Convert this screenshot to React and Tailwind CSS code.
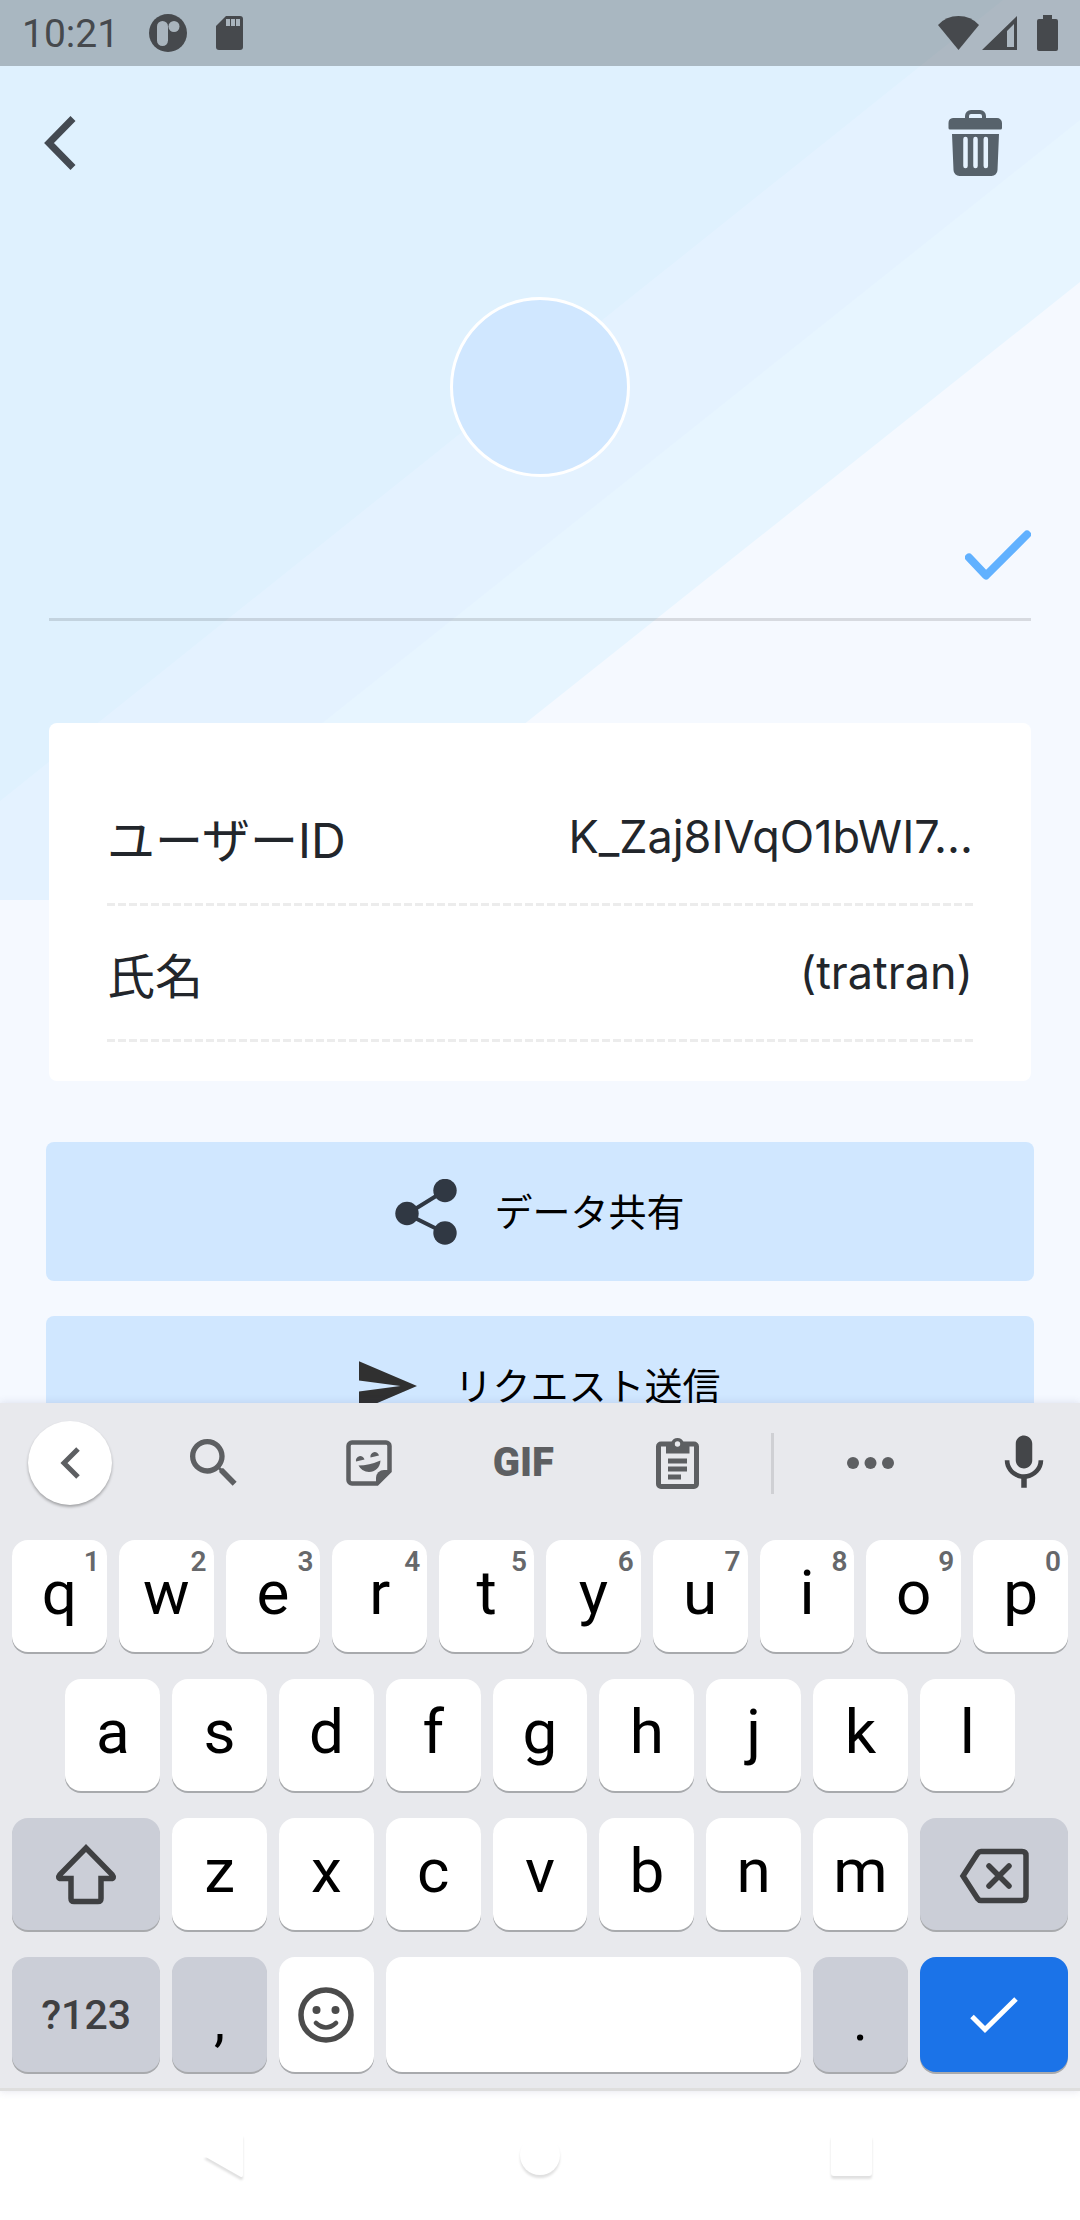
import React from "react";

const profileRows = [
  { label: "ユーザーID", value: "K_Zaj8IVqO1bWI7..." },
  { label: "氏名", value: "(tratran)" },
];

const topRow = ["q", "w", "e", "r", "t", "y", "u", "i", "o", "p"];
const homeRow = ["a", "s", "d", "f", "g", "h", "j", "k", "l"];
const bottomRow = ["z", "x", "c", "v", "b", "n", "m"];

function Backdrop() {
  return (
    <svg
      className="absolute inset-x-0 top-0 h-[900px] w-full"
      viewBox="0 0 1080 900"
      preserveAspectRatio="none"
      aria-hidden="true"
    >
      <path d="M0 0H1080V282L303 900H0Z" fill="#e7f5ff" />
      <path d="M0 0H1080V120L100 900H0Z" fill="#e4f2ff" />
      <path d="M0 0H1003L0 801Z" fill="#dff1fe" />
    </svg>
  );
}

function StatusBar() {
  return (
    <div className="flex h-[66px] shrink-0 items-center bg-black/24 pr-[22px] pl-[22px] text-[#46494d]">
      <span className="pt-[2px] text-[39px] leading-none">10:21</span>
      <svg className="ml-[30px] h-[38px] w-[38px]" viewBox="0 0 38 38" aria-hidden="true">
        <circle cx="19" cy="19" r="19" fill="currentColor" />
        <rect x="8" y="7" width="11" height="25" rx="5.5" fill="#a9b4bd" />
        <circle cx="25" cy="12.500" r="5.500" fill="#a9b4bd" />
      </svg>
      <svg className="ml-[28px] h-[36px] w-[28px]" viewBox="0 0 28 36" aria-hidden="true">
        <path d="M11 1H25a3 3 0 0 1 3 3V32a3 3 0 0 1-3 3H4a3 3 0 0 1-3-3V11Z" fill="currentColor" />
        <path d="M11 4h4v7h-4zM16 4h4v7h-4zM21 4h4v7h-4z" fill="#a9b4bd" />
      </svg>
      <span className="flex-1" />
      <svg className="h-[36px] w-[41px]" viewBox="0 0 41 36" aria-hidden="true">
        <path d="M0 10Q8 1 20.500 1T41 10L20.500 35Z" fill="currentColor" />
      </svg>
      <svg className="ml-[3px] h-[36px] w-[35px]" viewBox="0 0 35 36" aria-hidden="true">
        <path d="M35 1V35H0ZM32 9L25 16V32H32Z" fill="currentColor" fillRule="evenodd" />
      </svg>
      <svg className="ml-[20px] h-[36px] w-[21px]" viewBox="0 0 21 36" aria-hidden="true">
        <path d="M6 0h9v4h4a2 2 0 0 1 2 2V34a2 2 0 0 1-2 2H2a2 2 0 0 1-2-2V6a2 2 0 0 1 2-2h4z" fill="currentColor" />
      </svg>
    </div>
  );
}

function Header() {
  return (
    <header className="flex h-[154px] items-center justify-between pr-[77px] pl-[44px]">
      <button type="button" aria-label="戻る" className="text-[#444a52]">
        <svg className="h-[54px] w-[32px]" viewBox="0 0 32 54">
          <path d="M29 2.500L5 27L29 51.500" fill="none" stroke="currentColor" strokeWidth="7" />
        </svg>
      </button>
      <button type="button" aria-label="削除" className="text-[#57626b]">
        <svg className="h-[66px] w-[55px]" viewBox="0 0 55 66">
          <path d="M19 10V6a4 4 0 0 1 4-4H32a4 4 0 0 1 4 4V10" fill="none" stroke="currentColor" strokeWidth="4" />
          <path d="M5 8H49a5 5 0 0 1 5 5V18a1.500 1.500 0 0 1-1.500 1.500H2A1.500 1.500 0 0 1 .500 18V13A5 5 0 0 1 5 8Z" fill="currentColor" />
          <path d="M4 24H51L49.500 60a6 6 0 0 1-6 6H11.500a6 6 0 0 1-6-6Z" fill="currentColor" />
          <path d="M17.500 29V56M27.500 29V56M37.800 29V56" stroke="#e6f3ff" strokeWidth="4.500" strokeLinecap="round" />
        </svg>
      </button>
    </header>
  );
}

function ActionButton({ icon, children }) {
  return (
    <button
      type="button"
      className="flex h-[139px] w-full items-center justify-center gap-[37px] rounded-lg bg-[#d0e7ff] text-[38px] text-black"
    >
      {icon}
      <span className="pt-1">{children}</span>
    </button>
  );
}

const ShareIcon = (
  <svg className="h-[66px] w-[62px] text-[#303843]" viewBox="0 0 62 66" aria-hidden="true">
    <path d="M50 11.500L12 35L50 54" fill="none" stroke="currentColor" strokeWidth="4" />
    <circle cx="50" cy="11.500" r="11.700" fill="currentColor" />
    <circle cx="12" cy="34.500" r="11.700" fill="currentColor" />
    <circle cx="50" cy="54" r="11.700" fill="currentColor" />
  </svg>
);

const SendIcon = (
  <svg className="h-[50px] w-[58px] text-[#303030]" viewBox="2 3 21 18" aria-hidden="true">
    <path d="M2 3v7l15 2-15 2v7l21-9z" fill="currentColor" />
  </svg>
);

function Key({ wide, tone = "light", label, className = "", children }) {
  const tones = {
    light: "bg-white",
    dark: "bg-[#cbced7]",
    blue: "bg-[#1b73e8]",
  };
  return (
    <button
      type="button"
      aria-label={label}
      className={`relative flex items-center justify-center rounded-2xl shadow-[0_2px_0_#a8aaad] ${tones[tone]} ${wide || "col-span-2"} ${className}`}
    >
      {children}
    </button>
  );
}

function LetterKey({ letter, hint, className = "" }) {
  return (
    <Key className={`pb-[6px] text-[62px] leading-none text-black ${className}`}>
      {letter}
      {hint && (
        <span className="absolute top-2 right-[7px] text-[28px] leading-none font-semibold text-[#66686b]">
          {hint}
        </span>
      )}
    </Key>
  );
}

function Toolbar() {
  const cell = "flex flex-1 items-center justify-center";
  return (
    <div className="flex h-[120px] items-center text-[#5d5f62]">
      <div className="w-[137px] pl-7">
        <button
          type="button"
          aria-label="閉じる"
          className="flex h-[84px] w-[84px] items-center justify-center rounded-full bg-white shadow-[0_2px_3px_rgba(0,0,0,0.3)]"
        >
          <svg className="h-[34px] w-[20px]" viewBox="0 0 20 34">
            <path d="M18 3L4 17L18 31" fill="none" stroke="currentColor" strokeWidth="5" />
          </svg>
        </button>
      </div>
      <button type="button" aria-label="検索" className={cell}>
        <svg className="h-[64px] w-[64px]" viewBox="0 0 24 24">
          <path
            d="M15.500 14h-.79l-.28-.27C15.410 12.590 16 11.110 16 9.500 16 5.910 13.090 3 9.500 3S3 5.910 3 9.500 5.910 16 9.500 16c1.610 0 3.090-.59 4.230-1.570l.27.28v.79l5 4.990L20.490 19l-4.990-5zm-6 0C7.010 14 5 11.990 5 9.500S7.010 5 9.500 5 14 7.010 14 9.500 11.990 14 9.500 14z"
            fill="currentColor"
          />
        </svg>
      </button>
      <button type="button" aria-label="ステッカー" className={cell}>
        <svg className="h-[46px] w-[46px]" viewBox="0 0 46 46">
          <path d="M6 2.500H40A3.500 3.500 0 0 1 43.500 6V31L31 43.500H6A3.500 3.500 0 0 1 2.500 40V6A3.500 3.500 0 0 1 6 2.500Z" fill="none" stroke="currentColor" strokeWidth="4.500" />
          <path d="M30 45V38a8 8 0 0 1 8-8H45L31 45Z" fill="currentColor" />
          <path d="M12.500 25.500Q23 25.500 34.500 20.500C34 28 29 32 23 32Q16 32 12.500 25.500Z" fill="currentColor" />
          <path d="M10 21.500a4.300 4.300 0 1 1 8.500-2ZM24.500 17.500a4.300 4.300 0 1 1 8.500-2Z" fill="currentColor" />
        </svg>
      </button>
      <button type="button" className={`${cell} text-[40px] leading-none font-black`}>
        GIF
      </button>
      <button type="button" aria-label="クリップボード" className={cell}>
        <svg className="h-[52px] w-[43px]" viewBox="0 0 43 52">
          <rect x="2.500" y="7" width="38" height="42.500" rx="2.500" fill="none" stroke="currentColor" strokeWidth="5" />
          <path d="M10 5H15.500a6.500 6.500 0 0 1 12 0H33.500V16.500H10Z" fill="currentColor" />
          <circle cx="21.500" cy="7" r="2.700" fill="#e8e9ed" />
          <path d="M12 24H31M12 32H31M12 40H25" stroke="currentColor" strokeWidth="5" />
        </svg>
      </button>
      <span className="ml-4 h-[61px] w-[3px] bg-[#cfd0d4]" />
      <button type="button" aria-label="その他" className="flex w-[193px] items-center justify-center">
        <svg className="h-[12px] w-[47px]" viewBox="0 0 47 12">
          <circle cx="6" cy="6" r="6" fill="currentColor" />
          <circle cx="23.500" cy="6" r="6" fill="currentColor" />
          <circle cx="41" cy="6" r="6" fill="currentColor" />
        </svg>
      </button>
      <button type="button" aria-label="音声入力" className="flex w-[113px] items-center justify-center text-[#444649]">
        <svg className="h-[66px] w-[66px]" viewBox="0 0 24 24">
          <path
            d="M12 14c1.660 0 3-1.340 3-3V5c0-1.660-1.340-3-3-3S9 3.340 9 5v6c0 1.660 1.340 3 3 3zm5.300-3c0 3-2.540 5.100-5.300 5.100S6.700 14 6.700 11H5c0 3.410 2.720 6.230 6 6.720V21h2v-3.280c3.280-.48 6-3.300 6-6.720h-1.700z"
            fill="currentColor"
          />
        </svg>
      </button>
    </div>
  );
}

function Keyboard() {
  return (
    <section
      aria-label="キーボード"
      className="relative shrink-0 border-b-[3px] border-[#dedede] bg-[#e8e9ed] pb-4 shadow-[0_0_8px_rgba(60,60,120,0.15)]"
    >
      <Toolbar />
      <div className="mt-[17px] grid auto-rows-[112px] grid-cols-20 gap-x-3 gap-y-[27px] px-3">
        {topRow.map((letter, i) => (
          <LetterKey key={letter} letter={letter} hint={String((i + 1) % 10)} />
        ))}
        {homeRow.map((letter, i) => (
          <LetterKey key={letter} letter={letter} className={i === 0 ? "col-start-2" : ""} />
        ))}
        <Key wide="col-span-3 col-start-1" tone="dark" label="シフト" className="text-[#3f4042]">
          <svg className="h-[62px] w-[62px]" viewBox="0 0 62 62">
            <path
              d="M31 5L57 31.500Q60 35.500 56 35.500H46V55.500Q46 58.500 43 58.500H19Q16 58.500 16 55.500V35.500H6Q2 35.500 5 31.500Z"
              fill="none"
              stroke="currentColor"
              strokeWidth="5.500"
            />
          </svg>
        </Key>
        {bottomRow.map((letter) => (
          <LetterKey key={letter} letter={letter} />
        ))}
        <Key wide="col-span-3" tone="dark" label="削除キー" className="pt-1 text-[#3f4042]">
          <svg className="h-[56px] w-[70px]" viewBox="0 0 70 56" fill="none" stroke="currentColor" strokeWidth="5.500">
            <path d="M22 3.500H63Q67 3.500 67 7.500V48.500Q67 52.500 63 52.500H22Q20 52.500 18.500 50.500L4 28L18.500 5.500Q20 3.500 22 3.500Z" />
            <path d="M30 18L50 38M50 18L30 38" strokeLinecap="round" />
          </svg>
        </Key>
      </div>
      <div className="mt-[27px] grid auto-rows-[115px] grid-cols-20 gap-x-3 px-3">
        <Key wide="col-span-3" tone="dark" className="pt-[2px] text-[41px] leading-none font-medium text-[#3f4042]">
          ?123
        </Key>
        <Key tone="dark" className="pt-3 text-[56px] leading-none text-black">
          ,
        </Key>
        <Key label="絵文字" className="text-[#4b4b4b]">
          <svg className="h-[56px] w-[56px]" viewBox="0 0 56 56">
            <circle cx="28" cy="28" r="25" fill="none" stroke="currentColor" strokeWidth="5.500" />
            <circle cx="18.500" cy="23" r="4" fill="currentColor" />
            <circle cx="37.500" cy="23" r="4" fill="currentColor" />
            <path d="M18 36Q28 45 38 36" fill="none" stroke="currentColor" strokeWidth="4.500" strokeLinecap="round" />
          </svg>
        </Key>
        <Key wide="col-span-8" label="スペース" />
        <Key tone="dark" className="pt-3 text-[56px] leading-none text-black">
          .
        </Key>
        <Key wide="col-span-3" tone="blue" label="完了" className="text-white">
          <svg className="h-[38px] w-[48px]" viewBox="0 0 48 38">
            <path d="M2 20.500L15 33.500L46 3" fill="none" stroke="currentColor" strokeWidth="5" />
          </svg>
        </Key>
      </div>
    </section>
  );
}

function NavigationBar() {
  const icon = "h-[60px] w-[60px] drop-shadow-[0_3px_1px_rgba(0,0,0,0.12)]";
  return (
    <nav className="flex h-[129px] shrink-0 items-center justify-around bg-white px-[68px]">
      <button type="button" aria-label="戻るボタン">
        <svg className={icon} viewBox="0 0 60 60">
          <path d="M48 10V49Q48 52 45 50.500L9 30L45 8.500Q48 7 48 10Z" fill="#fff" />
        </svg>
      </button>
      <button type="button" aria-label="ホーム">
        <svg className={icon} viewBox="0 0 60 60">
          <circle cx="30" cy="29" r="20" fill="#fff" />
        </svg>
      </button>
      <button type="button" aria-label="最近のアプリ">
        <svg className={icon} viewBox="0 0 60 60">
          <rect x="6" y="9" width="41" height="41" rx="3" fill="#fff" />
        </svg>
      </button>
    </nav>
  );
}

export default function App() {
  return (
    <div className="flex h-screen flex-col bg-[#f5f9ff] font-[Roboto,'Noto_Sans_CJK_JP',sans-serif]">
      <div className="relative flex min-h-0 flex-1 flex-col overflow-hidden">
        <Backdrop />
        <div className="relative">
          <StatusBar />
          <Header />
          <main>
            <div className="mx-auto mt-[77px] h-[180px] w-[180px] rounded-full border-[3px] border-white bg-[#d0e7ff]" />
            <form className="mx-[49px] flex h-[144px] items-center border-b-[3px] border-black/12 pt-4">
              <input
                type="text"
                aria-label="名前"
                className="h-full min-w-0 flex-1 bg-transparent text-[48px] outline-none"
              />
              <button type="button" aria-label="保存" className="text-[#61b1ff]">
                <svg className="h-[51px] w-[66px]" viewBox="0 0 66 51">
                  <path
                    d="M4 27.500L21 45.500L62 4.500"
                    fill="none"
                    stroke="currentColor"
                    strokeWidth="8"
                    strokeLinecap="round"
                    strokeLinejoin="round"
                  />
                </svg>
              </button>
            </form>
            <dl className="mx-[49px] mt-[102px] rounded-lg bg-white px-[58px] pt-[47px] pb-[39px] font-[Inter,'Noto_Sans_CJK_JP',sans-serif] leading-[68px] text-[#22262b]">
              {profileRows.map((row) => (
                <div key={row.label}>
                  <div className="flex h-[133px] items-center justify-between">
                    <dt className="pt-2 text-[48px]">{row.label}</dt>
                    <dd className="text-[45px]">{row.value}</dd>
                  </div>
                  <div className="h-[3px] bg-[repeating-linear-gradient(90deg,#ececec_0_8px,transparent_8px_11px)]" />
                </div>
              ))}
            </dl>
            <div className="mx-[46px] mt-[61px] flex flex-col gap-[35px]">
              <ActionButton icon={ShareIcon}>データ共有</ActionButton>
              <ActionButton icon={SendIcon}>リクエスト送信</ActionButton>
            </div>
          </main>
        </div>
      </div>
      <Keyboard />
      <NavigationBar />
    </div>
  );
}
